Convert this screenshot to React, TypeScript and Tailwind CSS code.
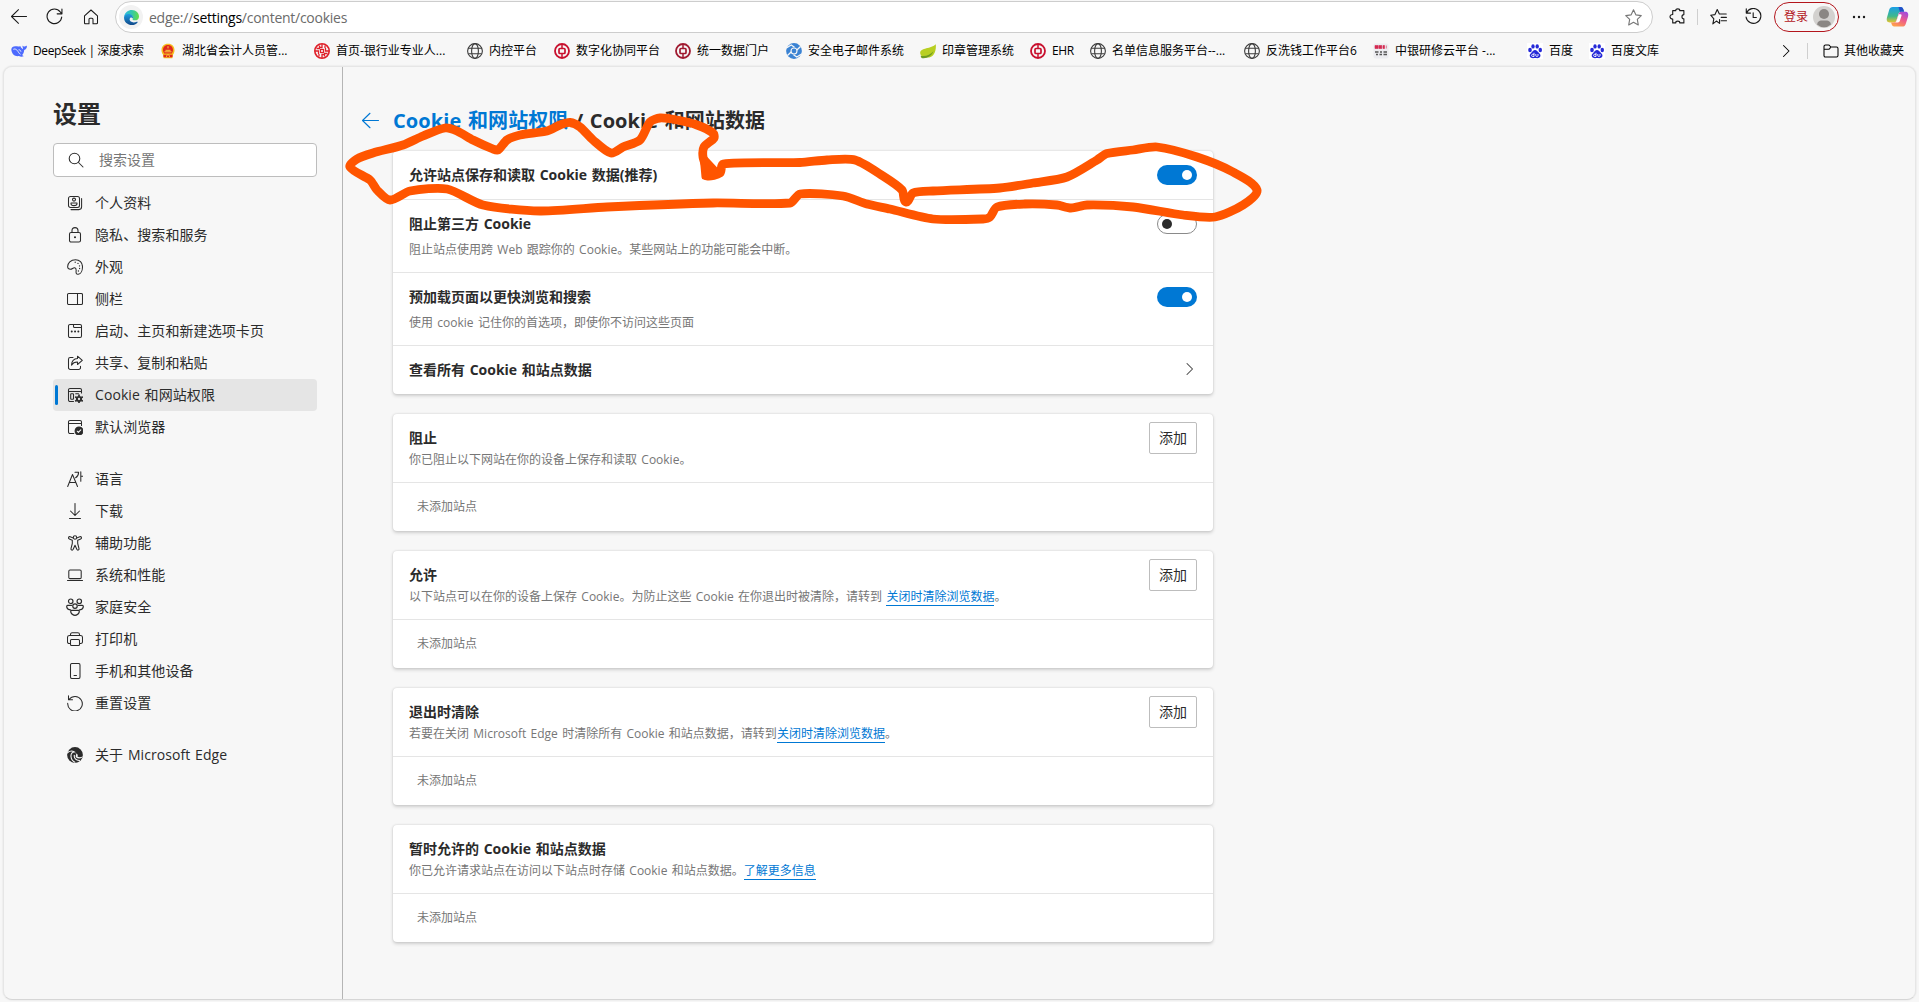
import type { ReactNode } from "react";

type IconProps = { children: ReactNode; className?: string };

function Line({ children, className = "size-4" }: IconProps) {
  return (
    <svg viewBox="0 0 16 16" className={`shrink-0 ${className}`} fill="none" stroke="currentColor" strokeWidth="1.05" strokeLinecap="round" strokeLinejoin="round">
      {children}
    </svg>
  );
}

/* ---------- sidebar icons ---------- */
const icons: Record<string, ReactNode> = {
  profile: (
    <Line>
      <rect x="1.5" y="1.5" width="11" height="11" rx="2" />
      <circle cx="7" cy="4.6" r="1.5" />
      <path d="M4 8h6v.8c0 1.2-1.3 1.8-3 1.8s-3-.6-3-1.8zM14.6 3.5v8.3a2.8 2.8 0 0 1-2.8 2.8H4" />
    </Line>
  ),
  lock: (
    <Line>
      <rect x="2.5" y="5.5" width="11" height="9.5" rx="1.6" />
      <path d="M5 5.500V3.600a3 3 0 0 1 6 0v1.900" />
      <circle cx="8" cy="10.200" r=".5" fill="currentColor" />
    </Line>
  ),
  palette: (
    <Line>
      <path d="M.7 8.300C.3 4 4 .7 8.500.7c4 0 7 3 7 7 0 3.700-1.600 7.300-4.300 7.600-2 .2-2.300-1.500-2.100-3 .2-1.600 0-3.300-1.500-3.500-1.600-.2-2.500 1.600-4.200 1.500C1.800 10.200.8 9.500.7 8.300z" />
      <path d="M8.200 3.200v.1M11 4.300v.1M12.500 6.800v.1M12.600 9.500v.1M11.400 12v.1" strokeWidth="1.300" />
    </Line>
  ),
  sidebar: (
    <Line>
      <rect x=".5" y="2.500" width="15" height="11" rx="1.200" />
      <path d="M10.500 2.500v11" />
    </Line>
  ),
  startup: (
    <Line>
      <rect x="1.500" y="1.500" width="13" height="13" rx="1.500" />
      <path d="M6.500 1.700v1.800c0 .6.400 1 1 1h7" />
      <path d="M4.700 8.500h.1M8 8.500h.1M11.300 8.500h.1" strokeWidth="1.900" />
    </Line>
  ),
  share: (
    <Line>
      <path d="M6 2.500H3.300a1.800 1.800 0 0 0-1.800 1.800v8.400a1.800 1.800 0 0 0 1.800 1.800h8.400a1.800 1.800 0 0 0 1.800-1.800v-1.500" />
      <path d="M10.500 1.200 15.300 5.300l-4.800 4.200V7.100C8 7 6 7.800 4.500 10.100 4.700 6.300 7 3.800 10.500 3.600z" />
    </Line>
  ),
  permissions: (
    <Line>
      <path d="M6.500 14.500H3a1.500 1.500 0 0 1-1.500-1.500V3A1.500 1.500 0 0 1 3 1.500h10A1.500 1.500 0 0 1 14.500 3v3M1.500 4.500h13" />
      <rect x="3.700" y="6.700" width="2.800" height="5.600" rx=".6" />
      <path d="M8.700 6.700h2.800" />
      <circle cx="12" cy="12" r="2.100" strokeWidth="1.900" />
      <path d="M12 7.600v1.800M12 14.600v1.800M8.190 9.800l1.560.9M14.250 13.300l1.560.9M8.190 14.200l1.560-.9M14.250 10.700l1.560-.9" strokeWidth="1.700" strokeLinecap="butt" />
    </Line>
  ),
  browser: (
    <Line>
      <path d="M6.800 14.500H3a1.500 1.500 0 0 1-1.500-1.500V3A1.500 1.500 0 0 1 3 1.500h10A1.500 1.500 0 0 1 14.500 3v3.500M1.500 4.500h13" />
      <circle cx="12" cy="12" r="3.900" fill="currentColor" />
      <path d="m10.200 12.200 1.200 1.200 2.400-2.600" stroke="#f7f7f7" />
    </Line>
  ),
  language: (
    <Line>
      <path d="M.7 15.500 5.500 3.500l5 12M2.500 11.500h6.200M8 1.200h3.600c0 2.600-1 4.400-3 5.600M13.800.7v9.500M13.800 5.300h2" />
    </Line>
  ),
  download: (
    <Line>
      <path d="M8 .5v12M3.500 8 8 12.500 12.500 8M2.500 15.500h11" />
    </Line>
  ),
  accessibility: (
    <Line>
      <circle cx="8" cy="2.400" r="1.700" />
      <path d="M6.300 2.900 3.200 1.700c-1.600-.5-2.500 1.600-.9 2.300L5.300 5.300v3.200L4 13.600c-.4 1.500 1.500 2.100 2.200.7L8 10.200l1.800 4.100c.7 1.400 2.600.8 2.200-.7l-1.300-5.100V5.300L13.700 4c1.600-.7.700-2.800-.9-2.300L9.700 2.900" />
    </Line>
  ),
  laptop: (
    <Line>
      <rect x="1.800" y="3" width="12.400" height="8.600" rx="1.200" />
      <path d="M.5 13.500h15" />
    </Line>
  ),
  family: (
    <Line className="-mx-px size-[18px]">
      <circle cx="4.200" cy="2.900" r="2" />
      <circle cx="11.800" cy="2.900" r="2" />
      <circle cx="8" cy="7.200" r="2" />
      <path d="M5 6.500H1.500C0 6.500.3 10.500 4 10.500M11 6.500h3.500c1.500 0 1.200 4-2.500 4M5 11h6c1.600 0 .8 4.400-3 4.400S3.400 11 5 11z" />
    </Line>
  ),
  printer: (
    <Line>
      <path d="M3.500 4.500v-1c0-1 .6-1.700 1.700-1.700h5.600c1.100 0 1.700.7 1.700 1.700v1M3.500 12.500H2.200c-1 0-1.700-.7-1.700-1.700V6.500c0-1.200.8-2 2-2h11c1.200 0 2 .8 2 2v4.300c0 1-.7 1.700-1.700 1.700h-1.300" />
      <rect x="3.500" y="8.500" width="9" height="6" rx="1" />
    </Line>
  ),
  phone: (
    <Line>
      <rect x="3.500" y=".5" width="9.500" height="15" rx="1.500" />
      <path d="M7 12.500h2.500" />
    </Line>
  ),
  reset: (
    <Line>
      <path d="M2.200 4.300A7.300 7.300 0 1 1 .7 8.300M1.500.7v4h4" />
    </Line>
  ),
  edge: (
    <svg viewBox="0 0 16 16" className="size-4 shrink-0">
      <circle cx="8" cy="8" r="7.900" fill="currentColor" />
      <path d="M.2 6.200C2 3.800 5.200 3.700 7.300 5 5 5.300 3.800 7.200 4 9.500c.2 2.700 2 4.900 4.300 6M7.400 7.800c-.8 2.800 1.500 6 5.500 5.600" fill="none" stroke="#f7f7f7" strokeWidth="1.100" />
      <path d="M8.200 6.500c2-.3 3.300 1.600 2.200 3.100 1.600 1 4 .8 5.400-.4l-.6 1.300c-1.800 1.200-4.500 1.200-6-.1-.9-.9-.5-2 .1-2.600-.2-.7-.6-1.100-1.100-1.300z" fill="#f7f7f7" />
    </svg>
  ),
};

const groups = [
  [
    ["profile", "个人资料"],
    ["lock", "隐私、搜索和服务"],
    ["palette", "外观"],
    ["sidebar", "侧栏"],
    ["startup", "启动、主页和新建选项卡页"],
    ["share", "共享、复制和粘贴"],
    ["permissions", "Cookie 和网站权限"],
    ["browser", "默认浏览器"],
  ],
  [
    ["language", "语言"],
    ["download", "下载"],
    ["accessibility", "辅助功能"],
    ["laptop", "系统和性能"],
    ["family", "家庭安全"],
    ["printer", "打印机"],
    ["phone", "手机和其他设备"],
    ["reset", "重置设置"],
  ],
  [["edge", "关于 Microsoft Edge"]],
];

/* ---------- bookmark icons ---------- */
const Globe = () => (
  <svg viewBox="0 0 16 16" className="size-4 shrink-0" fill="none" stroke="#3c3c3c" strokeWidth="1.100">
    <circle cx="8" cy="8" r="7.400" />
    <ellipse cx="8" cy="8" rx="3.400" ry="7.400" />
    <path d="M1.300 5.300h13.400M1.300 10.700h13.400" />
  </svg>
);

const Coin = ({ color }: { color: string }) => (
  <svg viewBox="0 0 16 16" className="size-4 shrink-0" fill="none" stroke={color}>
    <circle cx="8" cy="8" r="7" strokeWidth="1.800" />
    <rect x="5" y="5.500" width="6" height="5" rx="1" strokeWidth="1.700" />
    <path d="M8 1v4.500M8 10.500V15" strokeWidth="1.500" />
  </svg>
);

const Baidu = () => (
  <svg viewBox="0 0 16 16" className="size-4 shrink-0">
    <rect width="16" height="16" fill="#fff" />
    <g fill="#2529d8">
      <ellipse cx="3" cy="7" rx="1.800" ry="2.200" />
      <ellipse cx="6" cy="3.400" rx="1.700" ry="2.200" />
      <ellipse cx="10.200" cy="3.400" rx="1.700" ry="2.200" />
      <ellipse cx="13.300" cy="7" rx="1.700" ry="2.200" />
      <path d="M8 7c1.800 0 2.500 1.600 3.800 2.800 1.400 1.200 2 2.300 1.500 3.800-.8 2-3.300 1.600-5.200 1.500-2 .1-4.500.5-5.200-1.500-.5-1.500.1-2.600 1.500-3.800C5.600 8.600 6.300 7 8 7z" />
    </g>
    <path d="M7 9.800v3.700H5.600c-1.300 0-1.300-2.200 0-2.200H7M8.800 11v1.700c0 1 2.200 1 2.200 0V11" fill="none" stroke="#fff" strokeWidth=".9" />
  </svg>
);

const DeepSeek = () => (
  <svg viewBox="0 0 16 16" className="size-4 shrink-0">
    <path d="M.3 6.500C.5 4.300 2.300 3.200 4.600 3.300c1.200 0 2 .3 3 .2.600-.2 1.200-.6 2-.2-.3.800 1.400 1.900 2.200 3 .6-1.400-.7-2.700-.2-3.900.5 1 1.500 1.200 2.400 1 .6-.1 1.200-.7 1.900-.5.1 2-1 3.500-2.700 4.100-.1 2.200-.9 4-2.200 5.100.5.500 1.200.6 1.700 1.100-1.700.8-3.400.5-4.700-.1C4 13.800.7 11.300.3 6.500z" fill="#4d6bfe" />
    <path d="M2.300 6.300c2.300-1 4 .8 5.200 3 .6 1 1.200 1.700 2 2M7.600 6.800c1.200-.2 2.200.7 2.300 1.900" fill="none" stroke="#f7f7f7" strokeWidth=".9" />
  </svg>
);

const Emblem = () => (
  <svg viewBox="0 0 16 16" className="size-4 shrink-0">
    <path d="M8 .8c4 0 6.500 2.600 6.500 6.400 0 1.700-.5 3.200-1.400 4.300l-.8 3.700H3.700L3 11.500C2 10.400 1.500 8.900 1.500 7.200 1.500 3.400 4 .8 8 .8z" fill="#f5bd1c" />
    <path d="M8 2c3.200 0 5 2.200 5 5 0 1.300-.4 2.500-1.200 3.400H4.200C3.400 9.500 3 8.300 3 7c0-2.800 1.800-5 5-5zM3.500 11.800h9v2.400h-9z" fill="#e0261c" />
    <path d="M4.500 8.800h7M5.500 7.300h5M8 3.200v2.200M6.500 13.800c0-2.800 3-2.800 3 0" stroke="#f8d045" strokeWidth="1" fill="none" />
  </svg>
);

const Seal = () => (
  <svg viewBox="0 0 16 16" className="size-4 shrink-0" fill="none" stroke="#df2029">
    <circle cx="8" cy="8" r="7.200" strokeWidth="1.600" />
    <path d="M8 1v3.500H5M8 15v-3.500h3M1 8h3.500v3M15 8h-3.500V5M5.500 2.500v2M10.500 13.500v-2M2.500 5.500H6M13.500 10.500H10M11 2.500V5M5 13.500V11" strokeWidth="1.300" />
    <rect x="6.500" y="6.500" width="3" height="3" strokeWidth="1.200" />
  </svg>
);

const Mail = () => (
  <svg viewBox="0 0 16 16" className="size-4 shrink-0">
    <circle cx="8" cy="8" r="7.900" fill="#3b83d3" />
    <path d="M0 5.200 5.200 2l3.300 2.300M16 10.800 10.800 14l-3.300-2.300M1.500 12.500 7 7.200M14.500 3.500 9 8.800" fill="none" stroke="#f7f7f7" strokeWidth="1.300" />
    <circle cx="8" cy="8" r="3.500" fill="#f7f7f7" />
    <circle cx="8" cy="8" r="2.400" fill="#3b83d3" />
  </svg>
);

const Leaf = () => (
  <svg viewBox="0 0 16 16" className="size-4 shrink-0">
    <path d="M15.800 1.200c.6 7-1.800 13.400-8.600 13.400-3.800 0-7-1.500-7-4.600 0-5.600 11.200-4 15.600-8.800z" fill="#b8cf22" />
    <path d="M.5 12.700c5 1 9.500-.5 13-4.500-2 5-7 7.800-12 6.700z" fill="#6d9b22" />
  </svg>
);

const Training = () => (
  <svg viewBox="0 0 16 16" className="size-4 shrink-0">
    <rect x=".5" y=".5" width="15" height="15" rx="2" fill="#ececf0" />
    <path d="M2 2.500h3v3H2zM5.800 2.500h3v3h-3zM10 2.500h1.500v3H10zM13.300 5.500v-3" fill="#d42a50" stroke="#d42a50" strokeWidth=".6" />
    <path d="M2 9h3.500M7 9h2M10.500 9H14M3 11.500h2M6.500 11.500H9M10.500 11.500H14" stroke="#555" strokeWidth="1.500" />
  </svg>
);

const bookmarks: { icon: ReactNode; label: string; width: string; tight?: boolean }[] = [
  { icon: <DeepSeek />, label: "DeepSeek | 深度求索", width: "w-[149px]", tight: true },
  { icon: <Emblem />, label: "湖北省会计人员管...", width: "w-[154px]" },
  { icon: <Seal />, label: "首页-银行业专业人...", width: "w-[153px]" },
  { icon: <Globe />, label: "内控平台", width: "w-[87px]" },
  { icon: <Coin color="#c8102e" />, label: "数字化协同平台", width: "w-[121px]" },
  { icon: <Coin color="#a01a30" />, label: "统一数据门户", width: "w-[111px]" },
  { icon: <Mail />, label: "安全电子邮件系统", width: "w-[134px]" },
  { icon: <Leaf />, label: "印章管理系统", width: "w-[110px]" },
  { icon: <Coin color="#c8102e" />, label: "EHR", width: "w-[60px]", tight: true },
  { icon: <Globe />, label: "名单信息服务平台--...", width: "w-[154px]" },
  { icon: <Globe />, label: "反洗钱工作平台6", width: "w-[129px]" },
  { icon: <Training />, label: "中银研修云平台 -...", width: "w-[154px]" },
  { icon: <Baidu />, label: "百度", width: "w-[62px]" },
  { icon: <Baidu />, label: "百度文库", width: "w-[80px]" },
];

const EdgeLogo = () => (
  <svg viewBox="0 0 16 16" className="size-[15px]">
    <defs>
      <linearGradient id="eg" x1="0" y1="0.300" x2="1" y2="0.400">
        <stop offset="0" stopColor="#2bb8e6" />
        <stop offset=".55" stopColor="#36c9a5" />
        <stop offset="1" stopColor="#63dd4a" />
      </linearGradient>
      <linearGradient id="eb" x1="0" y1="0" x2="0" y2="1">
        <stop offset="0" stopColor="#1f9de0" />
        <stop offset="1" stopColor="#114a8b" />
      </linearGradient>
    </defs>
    <path d="M.1 7.200C.8 2.500 4.500 0 8.300 0 13 0 16 3.300 16 6.800c0 2.600-2 4.200-4.300 4.200-2 0-3-.8-2.300-1.800C10.200 7.700 9 5.500 6 5.300 3 5.200.7 6 .1 7.200z" fill="url(#eg)" />
    <path d="M.1 7.200C1 4.500 3.500 3.900 5.700 4.300c2.700.5 4.400 2.400 3.800 4.700C8 7.500 6.200 8 6 10c-.2 2.500 3.500 4.300 7.700 2.500.8-.3 1.200.2.700.8C12.800 15.200 10.700 16 8.500 16 3.500 16-.5 12 .1 7.200z" fill="url(#eb)" />
  </svg>
);

const Copilot = () => (
  <svg viewBox="0 0 24 22" className="h-[21px] w-[23px]">
    <defs>
      <linearGradient id="ca" x1="0" y1="0" x2="0" y2="1">
        <stop offset="0" stopColor="#1b9fe8" />
        <stop offset=".6" stopColor="#3fb98c" />
        <stop offset="1" stopColor="#e9c52b" />
      </linearGradient>
      <linearGradient id="cb" x1=".8" y1="0" x2=".3" y2="1">
        <stop offset="0" stopColor="#a04be0" />
        <stop offset=".5" stopColor="#ee5b8b" />
        <stop offset="1" stopColor="#ffa04a" />
      </linearGradient>
    </defs>
    <path d="M7 1h8.500c1.600 0 2.200 1 2.700 2.600l.8 2.400h-3c-1.700 0-2.600 1-3.100 2.700L11 15c-.6 1.700-1.400 2.300-3 2.300H4c-3 0-3.800-2.200-3-5.200L3.300 4C4 2 5 1 7 1z" fill="url(#ca)" />
    <path d="M13 1h2.500c1.600 0 2.200 1 2.700 2.600l.8 2.400h-4.500z" fill="#2351c9" />
    <path d="M17 21.500H8.500c-1.600 0-2.200-1-2.700-2.600l-.5-1.600H8c1.700 0 2.500-1 3-2.600l2-6c.5-1.700 1.400-2.700 3.100-2.700H20c3 0 3.800 2.200 3 5.200l-2.300 7.300c-.6 2-1.700 3-3.700 3z" fill="url(#cb)" />
    <path d="m13.300 8.700 1.800-.1c1.400 0 1.300 1 1 2l-1.500 4.700c-.4 1.200-1 2-2.300 2H9c1 0 1.600-.8 2-2z" fill="#fff" />
  </svg>
);

const Divider = ({ className }: { className: string }) => <div className={`h-4 w-px shrink-0 bg-[#cfcfcf] ${className}`} />;

function Toolbar() {
  return (
    <div className="flex h-[33px] items-start text-[#1b1b1b]">
      <div className="flex h-[33px] w-[115px] shrink-0 items-center pl-[11px]">
        <Line className="size-4">
          <path d="M.5 7.500h15M7.500.7.5 7.500l7 6.800" />
        </Line>
        <Line className="ml-[19px] size-[17px]">
          <path d="M14.800 8.500A6.900 6.900 0 1 1 13.400 3.600L15 5.500M15 1v4.500h-4.500" />
        </Line>
        <Line className="ml-5 size-4">
          <path d="M1.500 6.800 8 1l6.500 5.800v7c0 .7-.3 1-1 1H10v-4.500c0-.7-.4-1-1-1H7c-.6 0-1 .3-1 1v4.500H2.500c-.7 0-1-.3-1-1z" />
        </Line>
      </div>
      <div className="mt-px flex h-8 w-[1538px] shrink-0 items-center rounded-full border border-[#cdcdcd] bg-white pr-2.5 pl-[3px]">
        <div className="flex size-6 items-center justify-center rounded-full bg-[#f2f2f2]">
          <EdgeLogo />
        </div>
        <div className="ml-1.5 flex-1 pt-px text-[14px] leading-5 tracking-[-0.26px] text-[#6b6b6b]">
          edge://<span className="text-black">settings</span>/content/cookies
        </div>
        <Line className="size-[17px] text-[#777]">
          <path d="m8 .8 2.200 4.700 5.100.7-3.700 3.600.9 5.200L8 12.500 3.500 15l.9-5.200L.7 6.200l5.100-.7z" />
        </Line>
      </div>
      <div className="flex h-[33px] flex-1 items-center">
        <Line className="ml-4 size-[17px]">
          <path d="M3.500 2.500h2.800c0-2.300 3.900-2.300 3.900 0H14v3.700c-2.400 0-2.400 4 0 4V14h-3.800c0-2.200-3.900-2.200-3.900 0H3.500v-3.700c-3.400 0-3.400-4.200 0-4.200z" />
        </Line>
        <Divider className="ml-[11px]" />
        <Line className="ml-3 size-[17px]">
          <path d="M9 10.800v3.700L6 12.300 2.700 15l.9-4.800L.7 6.800l4-.6L6.800 1.500l2 4.100h6.500M10.500 8.800h5M10.500 12h5" />
        </Line>
        <Line className="ml-[18px] size-[17px]">
          <path d="M1.500 4.700A7 7 0 1 1 1 8.500M1.200.8v4h4M7.700 4.500V9h3" />
        </Line>
        <div className="ml-3 flex h-[30px] w-[65px] shrink-0 items-center justify-between rounded-full border border-[#b3151c] pr-[3px] pl-[9px] text-xs text-[#b3151c]">
          <span className="whitespace-nowrap">登录</span>
          <svg viewBox="0 0 22 22" className="size-[22px]">
            <circle cx="11" cy="11" r="11" fill="#d3d1cf" />
            <circle cx="11" cy="8" r="5" fill="#8a8683" />
            <path d="M4 18.500C4.500 15.500 6.500 14.500 8 14.500h6c1.500 0 3.500 1 4 4a10.500 10.500 0 0 1-14 0z" fill="#8a8683" />
          </svg>
        </div>
        <svg viewBox="0 0 14 4" className="ml-[13px] h-1 w-3.5 shrink-0" fill="currentColor">
          <circle cx="2" cy="2" r="1.200" />
          <circle cx="7" cy="2" r="1.200" />
          <circle cx="12" cy="2" r="1.200" />
        </svg>
        <div className="ml-5 shrink-0">
          <Copilot />
        </div>
      </div>
    </div>
  );
}

function BookmarksBar() {
  return (
    <div className="flex h-[33px] items-center pt-0.5 pl-[11px] text-xs text-black">
      {bookmarks.map((b, i) => (
        <div key={i} className={`flex shrink-0 items-center gap-1.5 whitespace-nowrap ${b.width}`}>
          {b.icon}
          <span className={b.tight ? "tracking-[-0.4px]" : ""}>{b.label}</span>
        </div>
      ))}
      <Line className="ml-[109px] size-4">
        <path d="m5.500 2.500 5.500 5.500-5.500 5.500" />
      </Line>
      <Divider className="ml-[13px]" />
      <Line className="ml-[15px] size-4">
        <path d="M1 12V3.500C1 2.500 1.600 2 2.500 2h3c.8 0 1.100.4 1.500 1l.7 1h5.800c1 0 1.500.6 1.500 1.500v7c0 1-.6 1.500-1.500 1.500h-11C1.500 14 1 13.400 1 12.500zM1 6.200h4.500c.8 0 1.200-.3 1.500-.9L7.700 4" />
      </Line>
      <span className="ml-[5px] whitespace-nowrap">其他收藏夹</span>
    </div>
  );
}

function Sidebar() {
  return (
    <aside className="w-[339px] shrink-0 border-r border-[#b5b5b5] pt-[29px] pr-[25px] pl-[49px] text-[#2b2b2b]">
      <h1 className="text-2xl leading-9 font-bold">设置</h1>
      <div className="mt-[11px] flex h-[34px] items-center rounded-sm border border-[#bdbdbd] bg-white pb-px pl-3.5 text-sm text-[#767676]">
        <Line className="size-4 text-[#2b2b2b]">
          <circle cx="6.500" cy="6.500" r="5.300" />
          <path d="m10.500 10.500 4.500 4.500" />
        </Line>
        <span className="ml-[15px]">搜索设置</span>
      </div>
      <nav className="mt-[10px] flex flex-col gap-5">
        {groups.map((group, i) => (
          <ul key={i}>
            {group.map(([icon, label]) => {
              const active = icon === "permissions";
              return (
                <li
                  key={icon}
                  className={`relative flex h-8 items-center gap-3 rounded-sm pl-3.5 text-sm leading-5 tracking-[0.08px] whitespace-nowrap [word-spacing:1px] ${active ? "bg-[#e5e5e5]" : ""}`}
                >
                  {active && <span className="absolute top-1.5 left-0.5 h-5 w-[3px] rounded-full bg-[#0078d4]" />}
                  {icons[icon]}
                  <span>{label}</span>
                </li>
              );
            })}
          </ul>
        ))}
      </nav>
    </aside>
  );
}

const Card = ({ children }: { children: ReactNode }) => (
  <section className="w-[820px] divide-y divide-[#e5e5e5] rounded-sm bg-white shadow-[0_1.6px_3.6px_rgba(0,0,0,0.16),0_0_2px_rgba(0,0,0,0.12)]">
    {children}
  </section>
);

const Toggle = ({ on }: { on?: boolean }) =>
  on ? (
    <span className="flex h-5 w-10 items-center justify-end rounded-full bg-[#0078d4] pr-[5px]">
      <span className="size-2.5 rounded-full bg-white" />
    </span>
  ) : (
    <span className="flex h-5 w-10 items-center rounded-full border border-[#8a8a8a] bg-white pl-1">
      <span className="size-2.5 rounded-full bg-[#2b2b2b]" />
    </span>
  );

function SettingRow({ title, note, control }: { title: string; note?: string; control: ReactNode }) {
  return (
    <div className={`flex items-start justify-between px-4 pt-3.5 ${note ? "h-[73px]" : "h-[49px] last:h-[48px]"}`}>
      <div>
        <h3 className="text-sm leading-5 font-bold [word-spacing:1px]">{title}</h3>
        {note && <p className="mt-2 text-xs leading-4 text-[#767676] [word-spacing:1.200px]">{note}</p>}
      </div>
      {control}
    </div>
  );
}

const Link = ({ children }: { children: ReactNode }) => (
  <a className="border-b border-[#0078d4] text-[#0078d4]">{children}</a>
);

function SiteList({ title, note, addable = true }: { title: string; note: ReactNode; addable?: boolean }) {
  return (
    <Card>
      <div className="flex h-[69px] items-start justify-between px-4 pt-2">
        <div className="pt-1.5">
          <h3 className="text-sm leading-5 font-bold [word-spacing:1px]">{title}</h3>
          <p className="mt-1 text-xs leading-4 text-[#767676] [word-spacing:1.200px]">{note}</p>
        </div>
        {addable && (
          <button className="h-8 w-12 rounded-xs border border-[#bdbdbd] bg-white text-sm whitespace-nowrap">添加</button>
        )}
      </div>
      <div className="flex h-[48px] items-center px-6 text-xs text-[#767676]">未添加站点</div>
    </Card>
  );
}

/* Freehand highlight drawn around the first setting. */
const stroke: [number, number][] = [
  [350, 167], [357, 159], [373, 153], [403, 145], [423, 136], [445, 128], [457, 131], [473, 140], [493, 149], [498, 150],
  [507, 140], [520, 135], [547, 131], [560, 125], [570, 122.5], [580, 127], [593, 140], [611, 153], [623, 147], [640, 140],
  [650, 122], [660, 118], [677, 120], [697, 125], [713, 133], [714, 138], [704, 147], [703, 157], [707, 170], [707, 176],
  [720, 173], [723, 164], [800, 162.5], [827, 160], [855, 160], [883, 176], [902, 190], [906, 202], [913, 193], [933, 191],
  [1000, 188], [1033, 183], [1067, 177], [1097, 160], [1107, 153.5], [1133, 150], [1157, 147], [1197, 157], [1233, 172],
  [1257, 190], [1243, 205], [1215, 217], [1183, 215], [1133, 207], [1087, 205], [1071, 208], [1057, 205], [1025, 204],
  [997, 207], [990, 217], [983, 219], [933, 219], [890, 209], [867, 204], [843, 196], [800, 194], [790, 203], [713, 203],
  [607, 207], [540, 211], [483, 205], [447, 189], [410, 191], [390, 200], [377, 190], [370, 180],
];

function smooth(points: [number, number][]) {
  const n = points.length;
  const at = (i: number) => points[(i + n) % n];
  let d = `M${at(0).join(" ")}`;
  for (let i = 0; i < n; i++) {
    const [a, b, c, e] = [at(i - 1), at(i), at(i + 1), at(i + 2)];
    const len = Math.hypot(c[0] - b[0], c[1] - b[1]);
    const before = Math.hypot(c[0] - a[0], c[1] - a[1]) || 1;
    const after = Math.hypot(e[0] - b[0], e[1] - b[1]) || 1;
    const k = len * 0.25;
    d += `C${b[0] + ((c[0] - a[0]) / before) * k} ${b[1] + ((c[1] - a[1]) / before) * k} ${c[0] - ((e[0] - b[0]) / after) * k} ${c[1] - ((e[1] - b[1]) / after) * k} ${c[0]} ${c[1]}`;
  }
  return d + "Z";
}

const Scribble = () => (
  <svg viewBox="340 110 930 120" className="pointer-events-none absolute top-[110px] left-[340px] h-[120px] w-[930px]">
    <path d={smooth(stroke)} fill="none" stroke="#ff5500" strokeWidth="8.800" strokeLinecap="round" strokeLinejoin="round" />
    <path d="M702 155 704 177 716 170z" fill="#ff5500" stroke="#ff5500" strokeWidth="5" strokeLinejoin="round" />
  </svg>
);

export default function App() {
  return (
    <div className="relative flex h-[1002px] w-[1919px] flex-col overflow-hidden bg-[#f7f7f7] font-['Open_Sans','Noto_Sans_CJK_SC',sans-serif]">
      <Toolbar />
      <BookmarksBar />
      <div className="mr-[3px] mb-0.5 ml-[3px] flex flex-1 rounded-[9px] border border-[#e6e6e6] border-b-[#d6d6d6] bg-[#f7f7f7] shadow-[0_0_2px_rgba(0,0,0,0.12)]">
        <Sidebar />
        <main className="pt-10 pl-[19px] text-[#2b2b2b]">
          <div className="flex items-center">
            <Line className="mb-0.5 size-[17px] text-[#0078d4]">
              <path d="M.5 8h15M7.500 1.200.5 8l7 6.800" />
            </Line>
            <h2 className="ml-[14px] text-xl leading-7 font-bold tracking-[0.1px] whitespace-nowrap [word-spacing:1.200px]">
              <span className="text-[#0078d4]">Cookie 和网站权限</span> / Cookie 和网站数据
            </h2>
          </div>
          <div className="mt-4 ml-[31px] flex flex-col gap-5">
            <Card>
              <SettingRow title="允许站点保存和读取 Cookie 数据(推荐)" control={<Toggle on />} />
              <SettingRow title="阻止第三方 Cookie" note="阻止站点使用跨 Web 跟踪你的 Cookie。某些网站上的功能可能会中断。" control={<Toggle />} />
              <SettingRow title="预加载页面以更快浏览和搜索" note="使用 cookie 记住你的首选项，即使你不访问这些页面" control={<Toggle on />} />
              <SettingRow
                title="查看所有 Cookie 和站点数据"
                control={
                  <Line className="mt-px size-4 text-[#444]">
                    <path d="M6 2.500 11.500 8 6 13.500" />
                  </Line>
                }
              />
            </Card>
            <SiteList title="阻止" note="你已阻止以下网站在你的设备上保存和读取 Cookie。" />
            <SiteList
              title="允许"
              note={<>以下站点可以在你的设备上保存 Cookie。为防止这些 Cookie 在你退出时被清除，请转到 <Link>关闭时清除浏览数据</Link>。</>}
            />
            <SiteList
              title="退出时清除"
              note={<>若要在关闭 Microsoft Edge 时清除所有 Cookie 和站点数据，请转到<Link>关闭时清除浏览数据</Link>。</>}
            />
            <SiteList
              title="暂时允许的 Cookie 和站点数据"
              addable={false}
              note={<>你已允许请求站点在访问以下站点时存储 Cookie 和站点数据。<Link>了解更多信息</Link></>}
            />
          </div>
        </main>
      </div>
      <Scribble />
    </div>
  );
}
